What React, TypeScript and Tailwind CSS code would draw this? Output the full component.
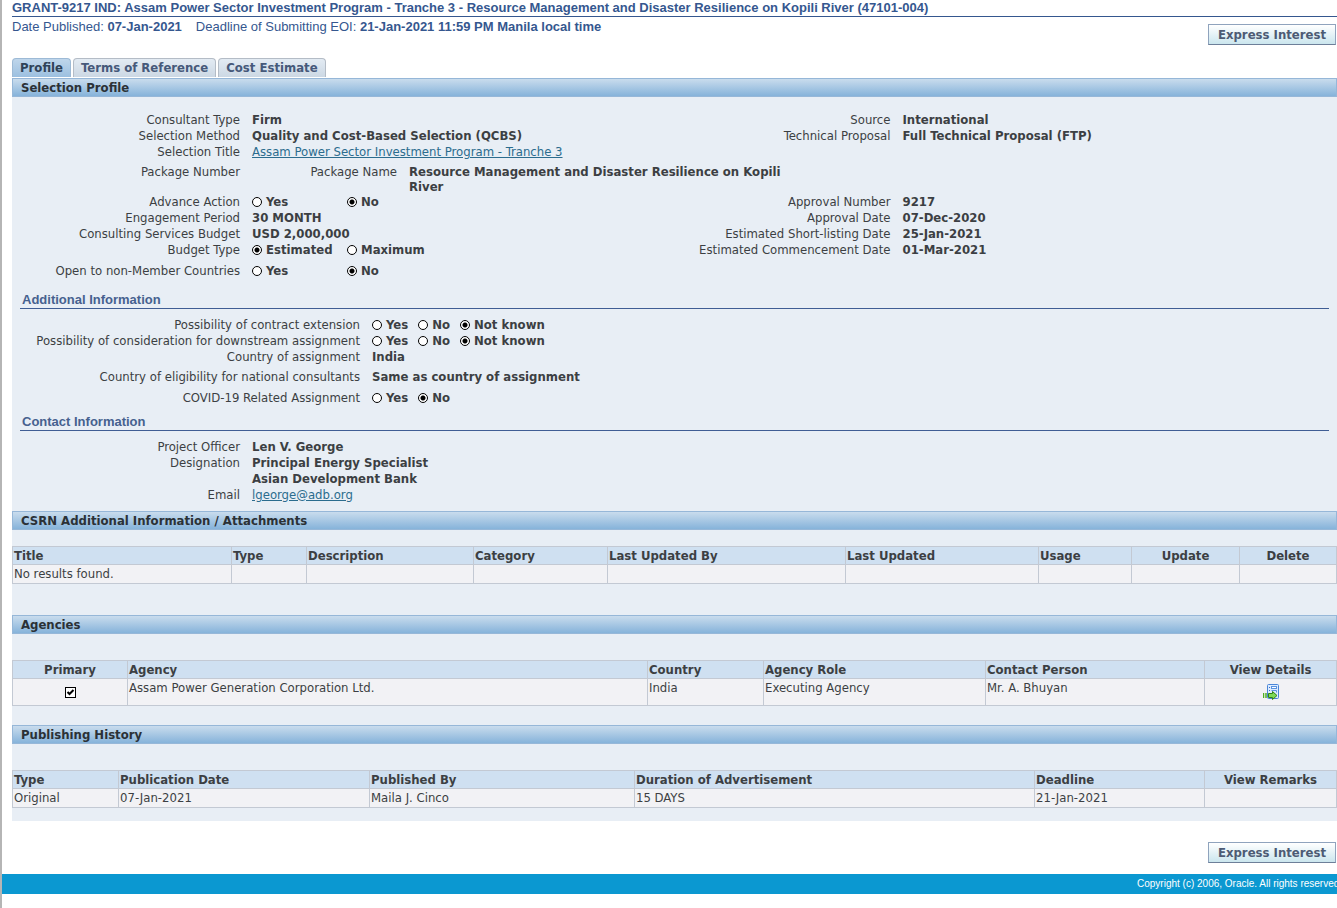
import React from "react";

const Field = ({ label, labelClass = "w-[228px]", children }: any) => {
  return (
    <div className="flex gap-3">
      <span className={`shrink-0 text-right ${labelClass}`}>{label}</span>
      <div className="font-bold">{children}</div>
    </div>
  );
};

const RadioGroup = ({ name, label, options, value, optionClass = "" }: any) => {
  return (
    <div role="radiogroup" aria-label={label} className="flex">
      {options.map((option: string) => (
        <label key={option} className={`flex items-center gap-1 ${optionClass}`}>
          <input
            type="radio"
            name={name}
            defaultChecked={option === value}
            className="size-[10px] appearance-none rounded-full border border-black bg-white checked:bg-[radial-gradient(circle,#000_2px,#fff_3px)]"
          />
          {option}
        </label>
      ))}
    </div>
  );
};

const SectionBar = ({ title }: any) => {
  return (
    <h2 className="h-[19px] border border-[#96b7d8] bg-linear-to-b from-[#c9dced] to-[#86b3da] pl-2 font-bold leading-[18px] text-[#2b3136]">
      {title}
    </h2>
  );
};

const SubHeading = ({ title }: any) => {
  return (
    <h3 className="mx-2 h-[17px] border-b border-[#3f5d94] pl-[2px] font-['Liberation_Sans',sans-serif] font-bold leading-4 text-[#46618f]">
      {title}
    </h3>
  );
};

const ExpressButton = () => {
  return (
    <button
      type="button"
      className="h-[21px] w-32 border border-[#8fa3bd] border-b-[#6d7f99] bg-linear-to-b from-white to-[#cbe6ee] text-center font-bold leading-[19px] text-[#4d5b74]"
    >
      Express Interest
    </button>
  );
};

const DataTable = ({ columns, children }: any) => {
  return (
    <div className="pr-px">
      <table className="w-full table-fixed border-collapse">
        <thead>
          <tr className="h-[18px] bg-[#cfe0f1]">
            {columns.map(([title, className]: string[]) => (
              <th
                key={title}
                className={`border border-[#c3c9d3] px-px pt-px leading-4 ${className}`}
              >
                {title}
              </th>
            ))}
          </tr>
        </thead>
        <tbody className="bg-[#f2f2f5]">{children}</tbody>
      </table>
    </div>
  );
};

const Cell = ({ className = "", children }: any) => {
  return (
    <td className={`border border-[#c3c9d3] px-px align-top leading-[18px] ${className}`}>
      {children}
    </td>
  );
};

const DetailsIcon = () => {
  return (
    <svg viewBox="0 0 16 16" className="block size-4" aria-hidden="true">
      <rect x="4.5" y="0.5" width="11" height="14" rx="1" fill="#dcebff" stroke="#4a86d8" />
      <path d="M6 3.5h1M6 6.5h1" stroke="#3a6fc4" />
      <rect x="8.5" y="2.5" width="5" height="2" fill="#fff" stroke="#5b93e0" />
      <path d="M8.5 6.5h5v2" fill="none" stroke="#5b93e0" />
      <path d="M0.5 9v5M3 9v5" stroke="#4fae20" strokeWidth="1.5" />
      <path d="M5.5 9.5h4v-2l4.5 4-4.5 4v-2h-4z" fill="#7ed957" stroke="#2f8414" />
    </svg>
  );
};

const tabs = ["Profile", "Terms of Reference", "Cost Estimate"];

const attachmentColumns = [
  ["Title", "w-[219px] text-left"],
  ["Type", "w-[75px] text-left"],
  ["Description", "w-[167px] text-left"],
  ["Category", "w-[134px] text-left"],
  ["Last Updated By", "w-[238px] text-left"],
  ["Last Updated", "w-[193px] text-left"],
  ["Usage", "w-[93px] text-left"],
  ["Update", "w-[108px] text-center"],
  ["Delete", "w-[97px] text-center"],
];

const agencyColumns = [
  ["Primary", "w-[115px] text-center"],
  ["Agency", "w-[520px] text-left"],
  ["Country", "w-[116px] text-left"],
  ["Agency Role", "w-[222px] text-left"],
  ["Contact Person", "w-[219px] text-left"],
  ["View Details", "w-[132px] text-center"],
];

const historyColumns = [
  ["Type", "w-[106px] text-left"],
  ["Publication Date", "w-[251px] text-left"],
  ["Published By", "w-[265px] text-left"],
  ["Duration of Advertisement", "w-[400px] text-left"],
  ["Deadline", "w-[170px] text-left"],
  ["View Remarks", "w-[132px] text-center"],
];

const App = () => {
  return (
    <div className="min-h-screen overflow-hidden border-l-2 border-[#b5b5b5] bg-white font-['DejaVu_Sans_Condensed','DejaVu_Sans',sans-serif] text-[13px] leading-4 text-[#3c3f43]">
      <main className="pl-[10px]">
        <header className="font-['Liberation_Sans',sans-serif] text-[#35578f]">
          <h1 className="h-[17px] border-b border-[#35578f] font-bold">
            GRANT-9217 IND: Assam Power Sector Investment Program - Tranche 3 -
            Resource Management and Disaster Resilience on Kopili River
            (47101-004)
          </h1>
          <p className="flex h-[7px] gap-[14px] whitespace-nowrap leading-5">
            <span>
              Date Published: <b>07-Jan-2021</b>
            </span>
            <span>
              Deadline of Submitting EOI:{" "}
              <b>21-Jan-2021 11:59 PM Manila local time</b>
            </span>
          </p>
        </header>
        <div className="flex justify-end pr-px">
          <ExpressButton />
        </div>

        <div role="tablist" className="mt-[13px] flex gap-[2px]">
          {tabs.map((tab, i) => (
            <button
              key={tab}
              type="button"
              role="tab"
              aria-selected={i === 0}
              className={`h-[19px] rounded-t border border-b-0 px-[7px] font-bold leading-[18px] ${
                i === 0
                  ? "border-[#9dbad6] bg-linear-to-b from-[#bfd6eb] to-[#9cc0e0] text-[#2f4257]"
                  : "border-[#b4bcc6] bg-linear-to-b from-[#e3ebf3] to-[#ccd8e4] text-[#46597a]"
              }`}
            >
              {tab}
            </button>
          ))}
        </div>

        <div className="mt-px bg-[#e8eef5] pb-[13px]">
          <SectionBar title="Selection Profile" />

          <div className="mt-[15px] flex">
            <div className="w-1/2">
              <Field label="Consultant Type">Firm</Field>
              <Field label="Selection Method">
                Quality and Cost-Based Selection (QCBS)
              </Field>
              <Field label="Selection Title">
                <a href="#selection" className="font-normal text-[#2b6c8e] underline">
                  Assam Power Sector Investment Program - Tranche 3
                </a>
              </Field>
            </div>
            <div className="w-1/2">
              <Field label="Source" labelClass="w-[216px]">
                International
              </Field>
              <Field label="Technical Proposal" labelClass="w-[216px]">
                Full Technical Proposal (FTP)
              </Field>
            </div>
          </div>

          <div className="mt-1 flex leading-[15px]">
            <Field label="Package Number" />
            <Field label="Package Name" labelClass="w-[145px]">
              <p className="max-w-[400px]">
                Resource Management and Disaster Resilience on Kopili River
              </p>
            </Field>
          </div>

          <div className="flex">
            <div className="w-1/2">
              <Field label="Advance Action">
                <RadioGroup
                  name="advance"
                  label="Advance Action"
                  options={["Yes", "No"]}
                  value="No"
                  optionClass="w-[95px]"
                />
              </Field>
              <Field label="Engagement Period">30 MONTH</Field>
              <Field label="Consulting Services Budget">USD 2,000,000</Field>
              <Field label="Budget Type">
                <RadioGroup
                  name="budget"
                  label="Budget Type"
                  options={["Estimated", "Maximum"]}
                  value="Estimated"
                  optionClass="w-[95px]"
                />
              </Field>
              <div className="mt-[5px]">
                <Field label="Open to non-Member Countries">
                  <RadioGroup
                    name="nonmember"
                    label="Open to non-Member Countries"
                    options={["Yes", "No"]}
                    value="No"
                    optionClass="w-[95px]"
                  />
                </Field>
              </div>
            </div>
            <div className="w-1/2">
              <Field label="Approval Number" labelClass="w-[216px]">
                9217
              </Field>
              <Field label="Approval Date" labelClass="w-[216px]">
                07-Dec-2020
              </Field>
              <Field label="Estimated Short-listing Date" labelClass="w-[216px]">
                25-Jan-2021
              </Field>
              <Field label="Estimated Commencement Date" labelClass="w-[216px]">
                01-Mar-2021
              </Field>
            </div>
          </div>

          <div className="mt-[13px]">
            <SubHeading title="Additional Information" />
          </div>
          <div className="mt-2">
            <Field label="Possibility of contract extension" labelClass="w-[348px]">
              <RadioGroup
                name="extension"
                label="Possibility of contract extension"
                options={["Yes", "No", "Not known"]}
                value="Not known"
                optionClass="mr-[10px]"
              />
            </Field>
            <Field
              label="Possibility of consideration for downstream assignment"
              labelClass="w-[348px]"
            >
              <RadioGroup
                name="downstream"
                label="Possibility of consideration for downstream assignment"
                options={["Yes", "No", "Not known"]}
                value="Not known"
                optionClass="mr-[10px]"
              />
            </Field>
            <Field label="Country of assignment" labelClass="w-[348px]">
              India
            </Field>
          </div>
          <div className="mt-1 flex flex-col gap-[5px]">
            <Field
              label="Country of eligibility for national consultants"
              labelClass="w-[348px]"
            >
              Same as country of assignment
            </Field>
            <Field label="COVID-19 Related Assignment" labelClass="w-[348px]">
              <RadioGroup
                name="covid"
                label="COVID-19 Related Assignment"
                options={["Yes", "No"]}
                value="No"
                optionClass="mr-[10px]"
              />
            </Field>
          </div>

          <div className="mt-2">
            <SubHeading title="Contact Information" />
          </div>
          <div className="mt-2">
            <Field label="Project Officer">Len V. George</Field>
            <Field label="Designation">
              Principal Energy Specialist
              <br />
              Asian Development Bank
            </Field>
            <Field label="Email">
              <a
                href="mailto:lgeorge@adb.org"
                className="font-normal text-[#2b6c8e] underline"
              >
                lgeorge@adb.org
              </a>
            </Field>
          </div>

          <div className="mt-2 mb-4">
            <SectionBar title="CSRN Additional Information / Attachments" />
          </div>
          <DataTable columns={attachmentColumns}>
            <tr className="h-[19px]">
              <Cell>No results found.</Cell>
              {attachmentColumns.slice(1).map(([title]) => (
                <Cell key={title} />
              ))}
            </tr>
          </DataTable>

          <div className="mt-[31px] mb-[26px]">
            <SectionBar title="Agencies" />
          </div>
          <DataTable columns={agencyColumns}>
            <tr className="h-[27px]">
              <Cell>
                <span className="relative mx-auto mt-2 block size-[11px]">
                  <input
                    type="checkbox"
                    defaultChecked
                    aria-label="Primary"
                    className="block size-[11px] appearance-none border border-black bg-white"
                  />
                  <svg
                    viewBox="0 0 11 11"
                    className="pointer-events-none absolute inset-0"
                    aria-hidden="true"
                  >
                    <path d="M2.5 5l2 2 4-4" fill="none" stroke="#000" strokeWidth="2" />
                  </svg>
                </span>
              </Cell>
              <Cell>Assam Power Generation Corporation Ltd.</Cell>
              <Cell>India</Cell>
              <Cell>Executing Agency</Cell>
              <Cell>Mr. A. Bhuyan</Cell>
              <Cell>
                <a href="#details" aria-label="View Details" className="mx-auto mt-[5px] block size-4">
                  <DetailsIcon />
                </a>
              </Cell>
            </tr>
          </DataTable>

          <div className="mt-[19px] mb-[26px]">
            <SectionBar title="Publishing History" />
          </div>
          <DataTable columns={historyColumns}>
            <tr className="h-[19px]">
              <Cell>Original</Cell>
              <Cell>07-Jan-2021</Cell>
              <Cell>Maila J. Cinco</Cell>
              <Cell>15 DAYS</Cell>
              <Cell>21-Jan-2021</Cell>
              <Cell />
            </tr>
          </DataTable>
        </div>

        <div className="mt-[21px] flex justify-end pr-px">
          <ExpressButton />
        </div>
      </main>

      <footer className="mt-[11px] flex h-5 justify-end overflow-hidden bg-[#0b98d1] font-['Liberation_Sans',sans-serif] text-[10px] leading-5 text-white">
        <p className="w-[200px] shrink-0 whitespace-nowrap">
          Copyright (c) 2006, Oracle. All rights reserved.
        </p>
      </footer>
    </div>
  );
};

export default App;
